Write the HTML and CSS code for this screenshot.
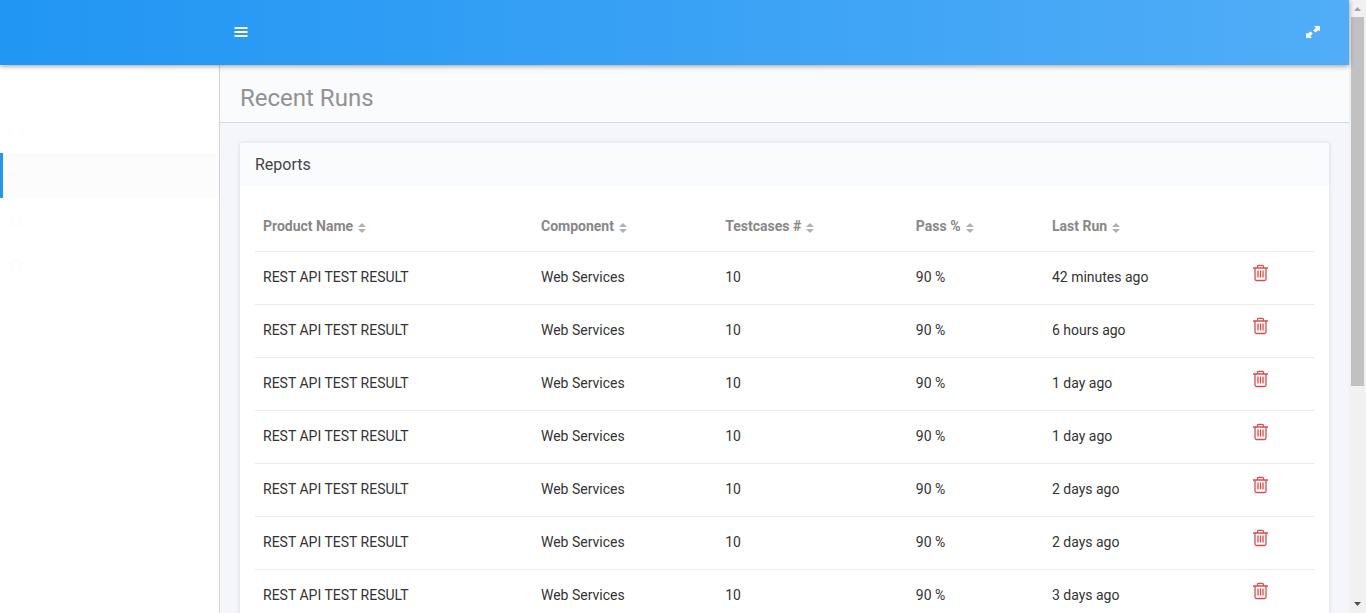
FILE: index.html
```html
<!DOCTYPE html>
<html lang="en">
<head>
<meta charset="utf-8">
<title>Recent Runs</title>
<link rel="stylesheet" href="styles.css">
</head>
<body>
<svg class="symbols" aria-hidden="true">
  <symbol id="sort" viewBox="0 0 8 10"><path d="M0 4L4 0L8 4ZM0 6L4 10L8 6Z" fill="currentColor"/></symbol>
  <symbol id="trash" viewBox="0 0 15 18"><path d="M0 4H15M4.5 3.5V2.5Q4.5 1.3 6 1.3H9Q10.5 1.3 10.5 2.5V3.5M2 4V15Q2 16.5 3.5 16.5H11.5Q13 16.5 13 15V4M5 6.5V13.5M7.5 6.5V13.5M10 6.5V13.5" fill="none" stroke="currentColor" stroke-width="1.3"/></symbol>
  <symbol id="layers" viewBox="0 0 16 16"><path d="M1 5L8 1.5L15 5L8 8.5ZM1 8L8 11.5L15 8M1 11L8 14.5L15 11" fill="none" stroke="currentColor"/></symbol>
</svg>
<div class="app">
  <header class="topbar">
    <button class="icon-button" aria-label="Toggle menu"><svg width="14" height="10" viewBox="0 0 14 10"><path d="M0.5 1H13.5M0.5 5H13.5M0.5 9H13.5" stroke="currentColor" stroke-width="2"/></svg></button>
    <button class="icon-button" aria-label="Full screen"><svg width="14" height="12" viewBox="0 0 14 12"><path d="M8 0H14V5L12.4 4.2L9.4 6.5L7.2 4.6L9.8 1.8ZM6 12H0V7L1.6 7.8L4.6 5.5L6.8 7.4L4.2 10.2Z" fill="currentColor"/></svg></button>
  </header>
  <div class="columns">
    <nav class="sidebar" aria-label="Main">
      <a class="nav-link" href="#" aria-label="Dashboard"><svg width="16" height="16" viewBox="0 0 16 16"><path d="M4 14A7 7 0 1 1 12 14M8 9L11 5" fill="none" stroke="currentColor"/></svg></a>
      <a class="nav-link active" href="#" aria-label="Recent runs"><svg width="14" height="14" viewBox="0 0 16 16"><path d="M2 2V6H6M2.5 6A6 6 0 1 1 3 11M8 5V8L10 10" fill="none" stroke="currentColor"/></svg></a>
      <a class="nav-link" href="#" aria-label="Products"><svg width="16" height="16"><use href="#layers"/></svg></a>
      <a class="nav-link" href="#" aria-label="Components"><svg width="16" height="16"><use href="#layers"/></svg></a>
    </nav>
    <main class="content">
      <h1 class="page-title">Recent Runs</h1>
      <section class="card">
        <h2 class="card-title">Reports</h2>
        <div class="card-body">
          <table class="runs">
            <colgroup><col class="col-product"><col class="col-component"><col class="col-tests"><col class="col-pass"><col class="col-last"><col></colgroup>
            <thead><tr>
              <th><button class="sort">Product Name<svg><use href="#sort"/></svg></button></th>
              <th><button class="sort">Component<svg><use href="#sort"/></svg></button></th>
              <th><button class="sort">Testcases #<svg><use href="#sort"/></svg></button></th>
              <th><button class="sort">Pass %<svg><use href="#sort"/></svg></button></th>
              <th><button class="sort">Last Run<svg><use href="#sort"/></svg></button></th>
              <td></td>
            </tr></thead>
            <tbody>
              <tr><td>REST API TEST RESULT</td><td>Web Services</td><td>10</td><td>90 %</td><td>42 minutes ago</td><td><button class="delete" aria-label="Delete"><svg><use href="#trash"/></svg></button></td></tr>
              <tr><td>REST API TEST RESULT</td><td>Web Services</td><td>10</td><td>90 %</td><td>6 hours ago</td><td><button class="delete" aria-label="Delete"><svg><use href="#trash"/></svg></button></td></tr>
              <tr><td>REST API TEST RESULT</td><td>Web Services</td><td>10</td><td>90 %</td><td>1 day ago</td><td><button class="delete" aria-label="Delete"><svg><use href="#trash"/></svg></button></td></tr>
              <tr><td>REST API TEST RESULT</td><td>Web Services</td><td>10</td><td>90 %</td><td>1 day ago</td><td><button class="delete" aria-label="Delete"><svg><use href="#trash"/></svg></button></td></tr>
              <tr><td>REST API TEST RESULT</td><td>Web Services</td><td>10</td><td>90 %</td><td>2 days ago</td><td><button class="delete" aria-label="Delete"><svg><use href="#trash"/></svg></button></td></tr>
              <tr><td>REST API TEST RESULT</td><td>Web Services</td><td>10</td><td>90 %</td><td>2 days ago</td><td><button class="delete" aria-label="Delete"><svg><use href="#trash"/></svg></button></td></tr>
              <tr><td>REST API TEST RESULT</td><td>Web Services</td><td>10</td><td>90 %</td><td>3 days ago</td><td><button class="delete" aria-label="Delete"><svg><use href="#trash"/></svg></button></td></tr>
            </tbody>
          </table>
        </div>
      </section>
    </main>
  </div>
</div>
<div class="scrollbar" aria-hidden="true">
  <svg width="17" height="17" viewBox="0 0 17 17"><path d="M5 11L8.5 7L12 11Z" fill="#a3a3a3"/></svg>
  <div class="track"><div class="thumb"></div></div>
  <svg width="17" height="17" viewBox="0 0 17 17"><path d="M5 6L8.5 10L12 6Z" fill="#505050"/></svg>
</div>
</body>
</html>
```

FILE: styles.css
```css
* { box-sizing: border-box; }

body {
  display: flex;
  height: 100vh;
  margin: 0;
  overflow: hidden;
  background: #f4f6fb;
  color: #333;
  font: 400 14px/21px Roboto, sans-serif;
}

button {
  padding: 0;
  border: 0;
  background: none;
  color: inherit;
  font: inherit;
  cursor: pointer;
}

svg { display: block; }
.symbols { position: absolute; width: 0; height: 0; }

.app {
  display: flex;
  flex: 1;
  flex-direction: column;
  min-width: 0;
}

.topbar {
  z-index: 1;
  display: flex;
  flex: none;
  align-items: center;
  justify-content: space-between;
  height: 65px;
  padding: 0 29px 1px 234px;
  background: linear-gradient(90deg, #2196f3, #51adf7);
  box-shadow: 0 1px 5px rgba(0, 0, 0, 0.4);
  color: #fff;
}

.columns { display: flex; flex: 1; min-height: 0; }

.sidebar {
  flex: none;
  width: 220px;
  padding-top: 43px;
  border-right: 1px solid #d3d7db;
  background: #fff;
}

.nav-link {
  display: flex;
  align-items: center;
  height: 45px;
  padding-left: 5px;
  border-left: 3px solid transparent;
  color: #fcfcfd;
}

.nav-link.active {
  border-left-color: #2196f3;
  background: #fcfcfc;
  color: #f5f8fb;
}

.content { flex: 1; min-width: 0; overflow: hidden; }

.page-title {
  margin: 0;
  padding: 17px 20px 8px;
  border-bottom: 1px solid #cfdde6;
  background: #fafbfd;
  color: #929292;
  font-size: 24px;
  font-weight: 400;
  line-height: 32px;
}

.card {
  margin: 20px;
  border-radius: 3px;
  background: #fff;
  box-shadow: 0 0 4px rgba(60, 70, 90, 0.16);
}

.card-title {
  margin: 0;
  padding: 10px 15px;
  border-radius: 3px 3px 0 0;
  background: #fafbfd;
  color: #444;
  font-size: 16px;
  font-weight: 400;
  line-height: 23px;
}

.card-body { padding: 15px; }

.runs {
  width: 100%;
  border-collapse: collapse;
  table-layout: fixed;
}

.col-product { width: 26.25%; }
.col-component { width: 17.4%; }
.col-tests { width: 18%; }
.col-pass { width: 12.85%; }
.col-last { width: 19%; }

.runs th, .runs td {
  height: 53px;
  padding: 0 8px;
  border-bottom: 1px solid #ebebeb;
  text-align: left;
  white-space: nowrap;
}

.runs thead th, .runs thead td {
  height: 50px;
  padding-top: 2px;
}

.sort {
  display: flex;
  align-items: center;
  gap: 5px;
  color: #888;
  font-weight: 700;
}

.sort svg {
  width: 8px;
  height: 10px;
  margin-top: 3px;
  color: #b0b0b0;
}

.delete {
  display: block;
  margin-bottom: 10px;
  color: #dc4b4b;
}

.delete svg { width: 15px; height: 18px; }

.scrollbar {
  display: flex;
  flex: none;
  flex-direction: column;
  width: 17px;
  background: #f1f1f1;
}

.track { flex: 1; padding: 0 2px; }
.thumb { height: 63.7%; background: #c1c1c1; }
```
